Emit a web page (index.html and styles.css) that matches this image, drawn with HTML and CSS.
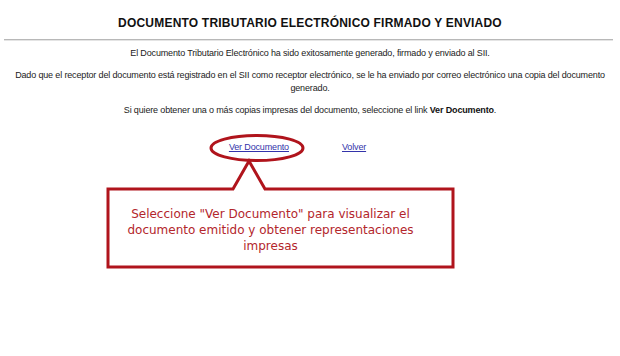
FILE: index.html
```html
<!DOCTYPE html>
<html lang="es">
<head>
<meta charset="utf-8">
<title>DTE firmado y enviado</title>
<link rel="stylesheet" href="styles.css">
</head>
<body>
<div class="page">
  <h1 class="title">DOCUMENTO TRIBUTARIO ELECTRÓNICO FIRMADO Y ENVIADO</h1>
  <hr class="rule">
  <div class="content">
    <p class="msg">El Documento Tributario Electrónico ha sido exitosamente generado, firmado y enviado al SII.</p>
    <p class="msg">Dado que el receptor del documento está registrado en el SII como receptor electrónico, se le ha enviado por correo electrónico una copia del documento generado.</p>
    <p class="msg">Si quiere obtener una o más copias impresas del documento, seleccione el link <b>Ver Documento</b>.</p>
    <div class="links">
      <a class="link" href="#">Ver Documento</a>
      <a class="link" href="#">Volver</a>
    </div>
  </div>
  <div class="annotation">
    <svg class="shapes" width="620" height="356" viewBox="0 0 620 356">
      <ellipse cx="257" cy="148" rx="46" ry="12.5" fill="none" stroke="#b0141c" stroke-width="3"/>
      <path d="M108 189 H233 L249 161 L265 189 H453 V267 H108 Z" fill="none" stroke="#b0141c" stroke-width="3" stroke-linejoin="miter"/>
    </svg>
    <div class="note">Seleccione "Ver Documento" para visualizar el documento emitido y obtener representaciones impresas</div>
  </div>
</div>
</body>
</html>
```

FILE: styles.css
```css
html, body {
  margin: 0;
  padding: 0;
  background: #ffffff;
}
.page {
  position: relative;
  width: 620px;
  height: 356px;
  font-family: "Liberation Sans", Arial, sans-serif;
  color: #222;
}
.title {
  margin: 0;
  padding-top: 16px;
  font-size: 12px;
  line-height: 15px;
  letter-spacing: 0.2px;
  font-weight: bold;
  text-align: center;
  color: #111;
}
.rule {
  margin: 8px 7px 0 4px;
  border: 0;
  border-top: 1px solid #b8b8b8;
  border-bottom: 1px solid #e4e4e4;
  height: 0;
}
.content {
  padding: 6px 14px 0;
  text-align: center;
}
.msg {
  margin: 0 0 9px;
  font-size: 9px;
  line-height: 13px;
  letter-spacing: -0.15px;
}
.msg b {
  color: #111;
}
.links {
  display: flex;
  justify-content: center;
  gap: 53px;
  padding-top: 15px;
  padding-right: 25px;
  font-size: 9px;
  line-height: 13px;
  letter-spacing: -0.15px;
}
.link {
  color: #3333aa;
  text-decoration: underline;
}
.annotation {
  position: absolute;
  left: 0;
  top: 0;
  width: 620px;
  height: 356px;
  pointer-events: none;
}
.shapes {
  position: absolute;
  left: 0;
  top: 0;
}
.note {
  position: absolute;
  left: 108px;
  top: 206px;
  width: 325px;
  font-family: "DejaVu Sans", Verdana, sans-serif;
  font-size: 12px;
  line-height: 16px;
  text-align: center;
  color: #b3262c;
}
```
